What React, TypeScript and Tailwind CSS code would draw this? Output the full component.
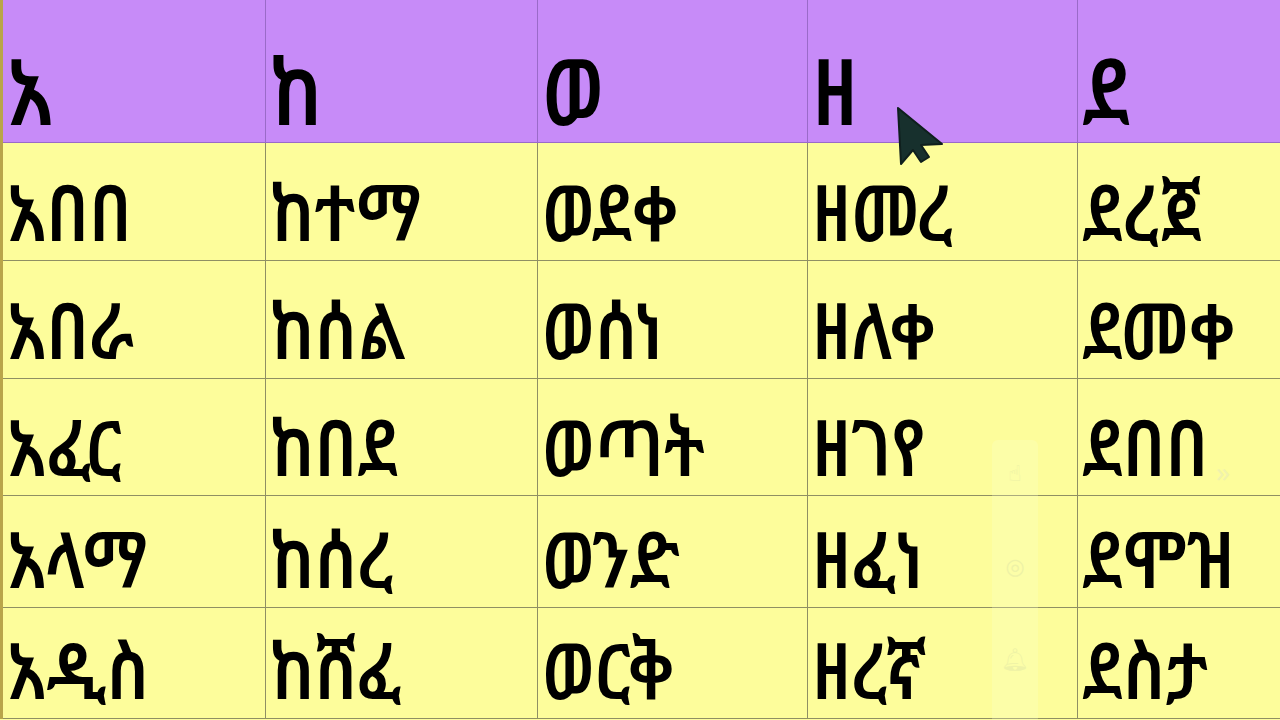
import React from "react";

const headers = ["አ", "ከ", "ወ", "ዘ", "ደ"];

const rows = [
  ["አበበ", "ከተማ", "ወደቀ", "ዘመረ", "ደረጀ"],
  ["አበራ", "ከሰል", "ወሰነ", "ዘለቀ", "ደመቀ"],
  ["አፈር", "ከበደ", "ወጣት", "ዘገየ", "ደበበ"],
  ["አላማ", "ከሰረ", "ወንድ", "ዘፈነ", "ደሞዝ"],
  ["አዲስ", "ከሸፈ", "ወርቅ", "ዘረኛ", "ደስታ"],
];

const rowHeights = ["h-[118px]", "h-[118px]", "h-[117px]", "h-[112px]", "h-[111px]"];

function Cursor() {
  return (
    <svg className="absolute left-[896px] top-[106px] w-[50px] h-[62px]" viewBox="0 0 50 62">
      <path d="M2 2 L5 58 L17 44 L25 56 L33 51 L25 39 L46 38 Z" fill="#17302d" stroke="#0f1f1d" strokeWidth="2" strokeLinejoin="round" />
    </svg>
  );
}

export default function App() {
  return (
    <div
      className="relative w-[1280px] h-[720px] overflow-hidden bg-[#fdfd9b] text-black"
      style={{ fontFamily: '"Noto Sans Ethiopic", "Abyssinica SIL", "Noto Sans", "DejaVu Sans", sans-serif' }}
    >
      <div className="grid grid-cols-[262px_272px_270px_270px_1fr] border-l-[3px] border-[#b9a54a]">
        {headers.map((h, i) => (
          <div
            key={h}
            className={`h-[143px] bg-[#c78bf8] border-b border-[#9a6ac8] ${i > 0 ? "border-l border-l-[#9a6ac8]" : ""} flex items-end pl-[4px] pb-[6px] text-[92px] leading-none font-semibold`}
          >
            <span className="inline-block origin-bottom-left scale-x-[0.86]">{h}</span>
          </div>
        ))}
        {rows.map((row, r) =>
          row.map((w, c) => (
            <div
              key={`${r}-${c}`}
              className={`${rowHeights[r]} border-b border-[#8f8f63] ${c > 0 ? "border-l border-l-[#8f8f63]" : ""} flex items-end pl-[4px] pb-[10px] text-[78px] leading-none font-semibold`}
            >
              <span className="inline-block origin-bottom-left scale-x-[0.86]">{w}</span>
            </div>
          ))
        )}
      </div>

      {/* faint side toolbar overlay */}
      <div className="absolute left-[992px] top-[440px] w-[46px] h-[290px] bg-[#fbffd0]/25 rounded-md flex flex-col items-center pt-[16px] gap-[60px] text-[#eef2a6]">
        <span className="text-[22px]">☝</span>
        <span className="text-[22px]">◎</span>
        <span className="text-[22px]">🔔︎</span>
      </div>
      <div className="absolute left-[1216px] top-[450px] text-[28px] text-[#f0f2ac]">»</div>

      <Cursor />
    </div>
  );
}
